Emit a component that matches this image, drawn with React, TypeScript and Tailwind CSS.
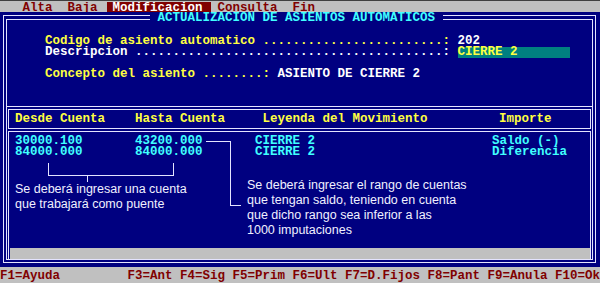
import React from "react";

const mono = "font-['Liberation_Mono',monospace] font-bold text-[12.5px] leading-[11px]";
const sans = "font-['Liberation_Sans',Arial,sans-serif] font-normal text-[12.5px] leading-[15px] text-[#f0f0ff]";
const dots = (n: number) => ".".repeat(n);

function MenuBar() {
  return (
    <div className="h-[12px] border-t border-[#404040] bg-[#c0c0c0] flex overflow-hidden text-[#800000]">
      <span className="ml-[22.5px] w-[45px] pt-[2px]">Alta</span>
      <span className="w-[39.5px] pt-[2px]">Baja</span>
      <span className="mt-[1px] w-[104px] pl-[5.5px] pt-[1px] bg-[#800000] text-white">Modificacion</span>
      <span className="ml-[6.5px] w-[75px] pt-[2px]">Consulta</span>
      <span className="pt-[2px]">Fin</span>
    </div>
  );
}

function Connectors() {
  return (
    <svg className="absolute left-0 top-0 pointer-events-none" width="600" height="283" viewBox="0 0 600 283">
      <g stroke="#e4e4ff" strokeWidth="1" fill="none" shapeRendering="crispEdges">
        <path d="M48.5 163 V175.5 H173.5 V163" />
        <path d="M87.5 175.5 V182" />
        <path d="M206 141.5 H230.5 V205.5 H241" />
      </g>
    </svg>
  );
}

export default function App() {
  return (
    <div className={`relative w-[600px] h-[283px] flex flex-col bg-[#000080] overflow-hidden ${mono}`}>
      <MenuBar />

      <div className="h-[255px] pt-[3px] pl-[3px] pr-[4px]">
        <div className="relative h-[248px] border border-[#e4e4ff] pt-[3px] px-[2px] pb-[2px]">
          <span className="absolute left-[146px] top-[-3px] h-[11px] whitespace-pre bg-[#000080] text-[#40ffff]">
            {" ACTUALIZACION DE ASIENTOS AUTOMATICOS "}
          </span>

          <div className="h-full border border-[#e4e4ff] flex flex-col">
            {/* datos del asiento */}
            <div className="h-[87px] shrink-0 border-b border-[#e4e4ff] pt-[16px] pl-[38px]">
              <div className="h-[11px] whitespace-pre text-[#ffff40]">
                {"Codigo de asiento automatico " + dots(24) + ":"}
                <span className="text-white"> 202</span>
              </div>
              <div className="h-[11px] whitespace-pre text-white">
                {"Descripcion " + dots(41) + ": "}
                <span className="inline-block w-[112.5px] h-[11px] bg-[#008080] text-[#ffff40]">CIERRE 2</span>
              </div>
              <div className="mt-[11px] h-[11px] whitespace-pre text-[#ffff40]">
                {"Concepto del asiento " + dots(8) + ": "}
                <span className="text-white">ASIENTO DE CIERRE 2</span>
              </div>
            </div>

            {/* encabezado */}
            <div className="mt-[2px] mx-[1px] h-[20px] shrink-0 border border-[#e4e4ff] pt-[4px] pl-[6px] flex text-[#ffff40] whitespace-pre">
              <span className="w-[120px]">Desde Cuenta</span>
              <span className="w-[127.5px]">Hasta Cuenta</span>
              <span className="w-[236.5px]">Leyenda del Movimiento</span>
              <span>Importe</span>
            </div>

            {/* movimientos */}
            <div className="mt-[2px] mx-[1px] flex-1 border-t border-x border-[#e4e4ff] pt-[4px] flex flex-col text-[#40ffff]">
              <div className="h-[11px] pl-[6px] flex whitespace-pre">
                <span className="w-[120px]">30000.100</span>
                <span className="w-[120px]">43200.000</span>
                <span className="w-[237px]">CIERRE 2</span>
                <span>Saldo (-)</span>
              </div>
              <div className="h-[11px] pl-[6px] flex whitespace-pre">
                <span className="w-[120px]">84000.000</span>
                <span className="w-[120px]">84000.000</span>
                <span className="w-[237px]">CIERRE 2</span>
                <span>Diferencia</span>
              </div>

              <div className={`flex items-start pl-[6px] ${sans}`}>
                <div className="mt-[24px] w-[232px]">
                  <div>Se deberá ingresar una cuenta</div>
                  <div>que trabajará como puente</div>
                </div>
                <div className="mt-[20px]">
                  <div>Se deberá ingresar el rango de cuentas</div>
                  <div>que tengan saldo, teniendo en cuenta</div>
                  <div>que dicho rango sea inferior a las</div>
                  <div>1000 imputaciones</div>
                </div>
              </div>

              <div className="mt-auto ml-[1px] h-[11px] bg-[#c0c0c0]" />
            </div>
          </div>
        </div>
      </div>

      <div className="h-[16px] bg-[#c0c0c0] pt-[4px] flex whitespace-pre text-[#800000]">
        <span className="w-[127.5px]">F1=Ayuda</span>
        <span>F3=Ant F4=Sig F5=Prim F6=Ult F7=D.Fijos F8=Pant F9=Anula F10=Ok</span>
      </div>

      <Connectors />
    </div>
  );
}
